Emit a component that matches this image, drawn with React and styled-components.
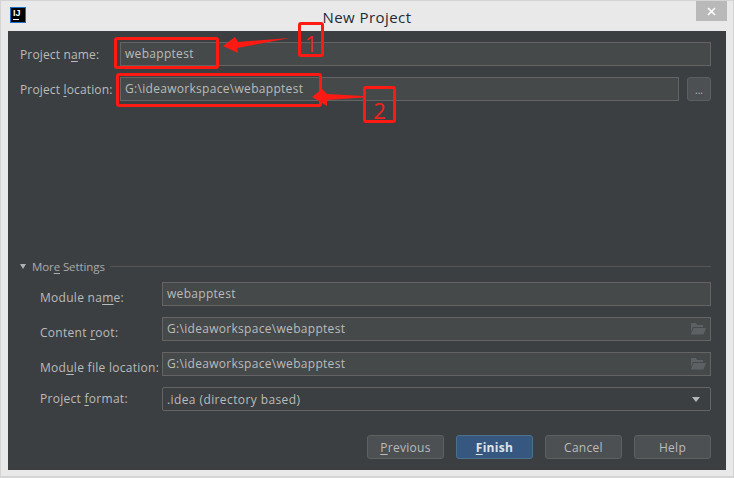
import styled, { createGlobalStyle } from "styled-components";

const GlobalStyle = createGlobalStyle`
  html, body { margin: 0; padding: 0; background: #e9e9e9; }
  body { font-family: "Open Sans", "Noto Sans", sans-serif; }
`;

const Frame = styled.div`
  position: relative;
  width: 734px;
  height: 478px;
  box-sizing: border-box;
  border: 1px solid #d4d4d4;
  border-bottom-width: 2px;
  background: #e9e9e9;
  display: flex;
  flex-direction: column;
  overflow: hidden;
`;

const TitleBar = styled.div`
  position: relative;
  height: 30px;
  flex: none;
  display: flex;
  align-items: center;
  justify-content: center;
`;

const AppIcon = styled.div`
  position: absolute;
  left: 9px;
  top: 6px;
  width: 12px;
  height: 14px;
  background: #000;
  border: 1px solid #1f6fc4;
  color: #fff;
  font: bold 9px/11px "Liberation Sans", sans-serif;
  padding-left: 2px;
  &::after {
    content: "";
    position: absolute;
    left: 2px;
    bottom: 2px;
    width: 6px;
    height: 1px;
    background: #fff;
  }
`;

const Title = styled.div`
  font-size: 15px;
  color: #1f2a36;
  padding-top: 1px;
  letter-spacing: 0.45px;
`;

const CloseButton = styled.div`
  position: absolute;
  right: 6px;
  top: 0;
  width: 31px;
  height: 20px;
  background: #b9b9b9;
  display: flex;
  align-items: center;
  justify-content: center;
`;

const Content = styled.div`
  flex: 1;
  margin: 0 7px 6px 7px;
  padding: 11px 15px 11px 12px;
  background: #3c3f41;
  display: flex;
  flex-direction: column;
  min-height: 0;
`;

const Row = styled.div`
  display: flex;
  align-items: center;
  height: 24px;
  margin-bottom: ${(p) => p.$gap ?? 11}px;
`;

const Label = styled.label`
  flex: none;
  width: ${(p) => p.$width}px;
  padding-left: ${(p) => p.$indent ?? 0}px;
  box-sizing: border-box;
  font-size: 12px;
  color: #bbbbbb;
  white-space: nowrap;
  letter-spacing: ${(p) => (p.$indent ? 0.28 : 0.15)}px;
  position: relative;
  top: ${(p) => p.$shift ?? 0}px;
`;

const Field = styled.div`
  position: relative;
  flex: 1;
  height: 24px;
  box-sizing: border-box;
  padding: ${(p) => (p.$combo ? "1px 4px 0" : "0 4px")};
  background: ${(p) => (p.$combo ? "#3c3f41" : "#45494a")};
  border: 1px solid #646464;
  border-radius: ${(p) => (p.$combo ? 2 : 0)}px;
  color: #bbbbbb;
  font-size: 12px;
  line-height: 20px;
  display: flex;
  align-items: center;
  justify-content: space-between;
  letter-spacing: ${(p) => (p.$combo ? 0.4 : 0.3)}px;
`;

const BrowseButton = styled.div`
  flex: none;
  width: 24px;
  height: 24px;
  margin-left: 8px;
  box-sizing: border-box;
  background: #4c5052;
  border: 1px solid #5c5f61;
  border-radius: 3px;
  color: #bbbbbb;
  font-size: 10px;
  line-height: 24px;
  text-align: center;
`;

const Spacer = styled.div`
  flex: 1;
`;

const SectionHeader = styled.div`
  display: flex;
  align-items: center;
  height: 16px;
  margin-bottom: 8px;
`;

const Caret = styled.span`
  width: 0;
  height: 0;
  border-left: 3.5px solid transparent;
  border-right: 3.5px solid transparent;
  border-top: 5px solid #afb1b3;
  margin-right: 6px;
`;

const SectionTitle = styled.span`
  font-size: 11.5px;
  color: #a9abad;
  margin-right: 5px;
  letter-spacing: -0.1px;
`;

const SectionLine = styled.span`
  flex: 1;
  height: 1px;
  background: #555555;
`;

const ButtonBar = styled.div`
  display: flex;
  justify-content: flex-end;
  gap: 12px;
  margin-top: 24px;
`;

const Button = styled.div`
  width: 77px;
  height: 24px;
  box-sizing: border-box;
  border-radius: 3px;
  border: 1px solid ${(p) => (p.$primary ? "#4c708c" : "#5e6060")};
  background: ${(p) => (p.$primary ? "#365880" : "#4c5052")};
  color: ${(p) => (p.$primary ? "#dfe4ea" : "#bbbbbb")};
  font-size: 12px;
  font-weight: ${(p) => (p.$primary ? 700 : 400)};
  line-height: 23px;
  text-align: center;
  letter-spacing: 0.3px;
`;

const Mnemonic = styled.span`
  text-decoration: underline;
  text-underline-offset: 2px;
`;

const Callout = styled.div`
  position: absolute;
  left: ${(p) => p.$x}px;
  top: ${(p) => p.$y}px;
  width: ${(p) => p.$w}px;
  height: ${(p) => p.$h}px;
  box-sizing: border-box;
  border: 3px solid #fd1a12;
  border-radius: 3px;
  color: #f2231b;
  font-size: 22px;
  line-height: ${(p) => p.$h - 6 + (p.$drop ?? 0) * 2}px;
  text-align: center;
`;

const ArrowLayer = styled.svg`
  position: absolute;
  left: -1px;
  top: -1px;
  pointer-events: none;
`;

const ComboArrow = styled.span`
  width: 0;
  height: 0;
  border-left: 4.5px solid transparent;
  border-right: 4.5px solid transparent;
  border-top: 5px solid #b4b6b8;
  margin-right: 6px;
`;

const FolderIcon = () => (
  <svg width="16" height="12" viewBox="0 0 16 12">
    <path d="M1 0h5l1 2h6v2H3L1 9z" fill="#5d6163" />
    <path d="M3.5 5H16l-2.5 6.5H0.8z" fill="#5d6163" />
  </svg>
);

export default function App() {
  return (
    <>
      <GlobalStyle />
      <Frame>
        <TitleBar>
          <AppIcon>IJ</AppIcon>
          <Title>New Project</Title>
          <CloseButton>
            <svg width="9" height="9" viewBox="0 0 9 9">
              <path d="M1 1l7 7M8 1L1 8" stroke="#fff" strokeWidth="1.7" />
            </svg>
          </CloseButton>
        </TitleBar>

        <Content>
          <Row>
            <Label $width={100}>Project n<Mnemonic>a</Mnemonic>me:</Label>
            <Field>webapptest</Field>
          </Row>
          <Row>
            <Label $width={100}>Project <Mnemonic>l</Mnemonic>ocation:</Label>
            <Field>G:\ideaworkspace\webapptest</Field>
            <BrowseButton>...</BrowseButton>
          </Row>

          <Spacer />

          <SectionHeader>
            <Caret />
            <SectionTitle>Mor<Mnemonic>e</Mnemonic> Settings</SectionTitle>
            <SectionLine />
          </SectionHeader>

          <Row>
            <Label $width={142} $indent={20} $shift={3}>Module na<Mnemonic>m</Mnemonic>e:</Label>
            <Field>webapptest</Field>
          </Row>
          <Row>
            <Label $width={142} $indent={20} $shift={3}>Content <Mnemonic>r</Mnemonic>oot:</Label>
            <Field>
              G:\ideaworkspace\webapptest
              <FolderIcon />
            </Field>
          </Row>
          <Row>
            <Label $width={142} $indent={20} $shift={3}>Mod<Mnemonic>u</Mnemonic>le file location:</Label>
            <Field>
              G:\ideaworkspace\webapptest
              <FolderIcon />
            </Field>
          </Row>
          <Row $gap={0}>
            <Label $width={142} $indent={20} $shift={-1}>Project <Mnemonic>f</Mnemonic>ormat:</Label>
            <Field $combo>
              .idea (directory based)
              <ComboArrow />
            </Field>
          </Row>

          <ButtonBar>
            <Button><Mnemonic>P</Mnemonic>revious</Button>
            <Button $primary><Mnemonic>F</Mnemonic>inish</Button>
            <Button>Cancel</Button>
            <Button>Help</Button>
          </ButtonBar>
        </Content>

        <Callout $x={113} $y={36} $w={105} $h={32} />
        <Callout $x={115} $y={72} $w={206} $h={34} />
        <Callout $x={297} $y={21} $w={26} $h={35} $drop={4}>1</Callout>
        <Callout $x={362} $y={85} $w={33} $h={37} $drop={6}>2</Callout>

        <ArrowLayer width="734" height="478" viewBox="0 0 734 478">
          <path d="M290 38L238 42L235 37L223 46L238 53L237 48z" fill="#fd1a12" />
          <path d="M363 96L327 94L322 89L312 97L327 106L327 100L363 97.5z" fill="#fd1a12" />
        </ArrowLayer>
      </Frame>
    </>
  );
}
